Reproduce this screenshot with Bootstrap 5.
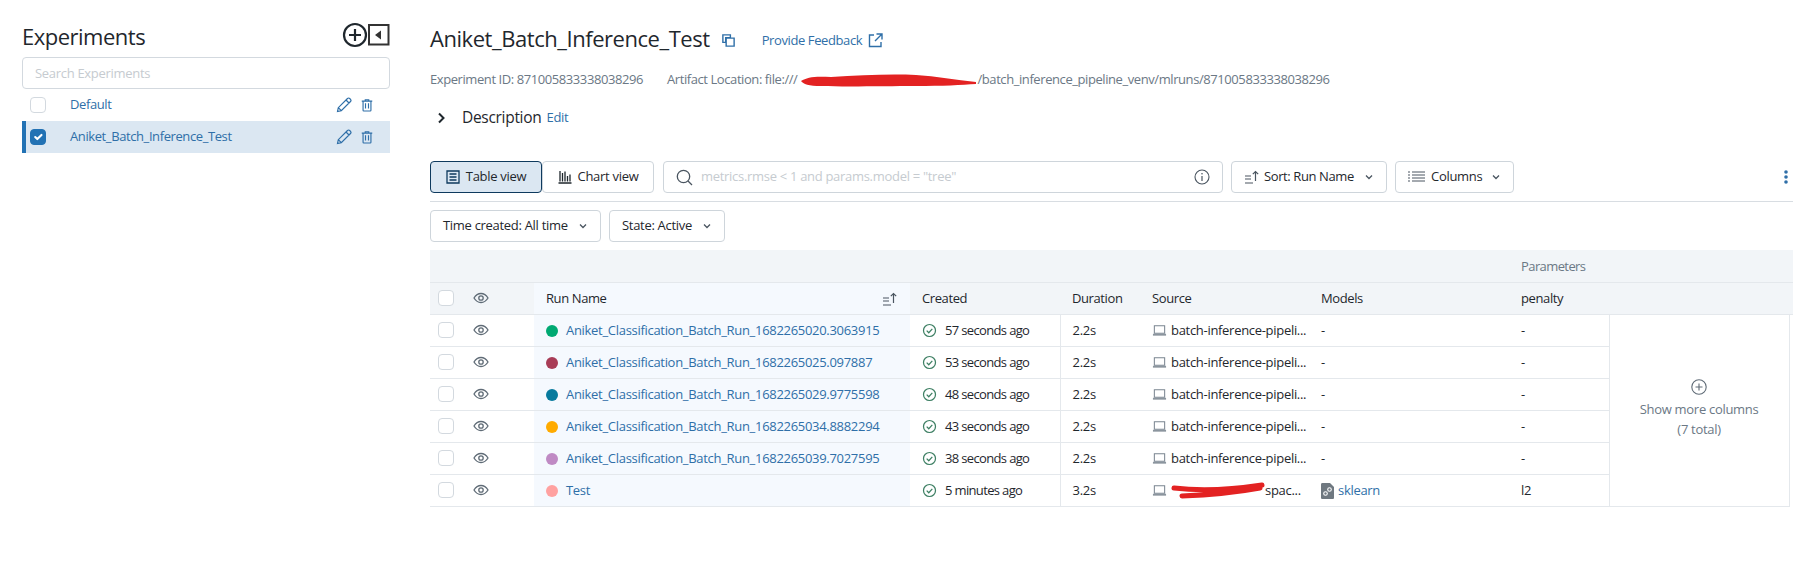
<!DOCTYPE html>
<html lang="en">
<head>
  <meta charset="UTF-8" />
  <meta name="viewport" content="width=device-width, initial-scale=1.0"/>
  <title>Experiments</title>
  <link href="https://cdn.jsdelivr.net/npm/bootstrap@5.3.2/dist/css/bootstrap.min.css" rel="stylesheet" />
  <style>
    body {
      font-family: "Open Sans", "Noto Sans", sans-serif;
      font-size: 13px;
      letter-spacing: -0.3px;
      color: #1f272d;
      background: #fff;
      height: 580px;
      overflow: hidden;
    }
    a { color: #2f6fa8; text-decoration: none; }
    .ico { flex: none; display: block; }

    /* sidebar */
    .side-col { width: 390px; padding-left: 22px; flex: none; }
    .side-head { height: 57px; padding-top: 21px; }
    .side-title { font-size: 22px; font-weight: 400; line-height: 30px; margin: 0; letter-spacing: -0.5px; }
    .side-search {
      height: 32px; font-size: 13px; border-color: #d3d9df; border-radius: 4px; padding: 0 12px; letter-spacing: -0.3px;
    }
    .side-search::placeholder, .qry-input::placeholder { color: #c6cbd0; opacity: 1; }
    .list-group-flush > .exp-row {
      height: 32px; border: 0; border-left: 4px solid transparent; background: transparent; padding: 0 16px 0 4px;
      gap: 24px; color: #2f6fa8; letter-spacing: -0.4px;
    }
    .list-group-flush > .exp-row.is-on { background: #dbe7f2; border-left-color: #2272b4; }
    .exp-row .exp-name { flex-grow: 1; }
    .exp-row .bin-ico { margin-left: -16px; }
    .form-check-input.tick {
      width: 16px; height: 16px; margin: 0; flex: none; border-color: #d3d9df; border-radius: 4px;
    }
    .form-check-input.tick:checked { background-color: #2272b4; border-color: #2272b4; }

    /* main header */
    .main-col { width: 1363px; margin-left: 40px; flex: none; }
    .exp-head { height: 32px; margin-top: 23px; }
    .exp-title { font-size: 22px; font-weight: 500; margin: 0 0 2px; letter-spacing: -0.45px; line-height: 30px; }
    .copy-ico { margin: 2px 0 0 11px; }
    .feedback { margin: 3px 0 0 26px; gap: 6px; letter-spacing: -0.4px; }
    .meta-line { margin-top: 14px; line-height: 20px; color: #6b7885; gap: 24px; white-space: nowrap; letter-spacing: -0.42px; }
    .scrib { display: inline-block; vertical-align: middle; margin-left: 4px; }
    .scrib-src { margin-right: -4px; }
    .desc-line { margin-top: 17px; height: 24px; padding-left: 7px; }
    .desc-text { font-size: 15.5px; margin-left: 16px; margin-right: 5px; letter-spacing: -0.3px; }

    /* toolbar */
    .tool-bar { margin-top: 31px; padding-bottom: 8px; border-bottom: 1px solid #d8dde2; gap: 8px; padding-right: 5px; }
    .tool-btn {
      height: 32px; font-size: 13px; letter-spacing: -0.3px; color: #1f272d; border: 1px solid #ced5db; border-radius: 4px;
      padding: 0 12px; background: #fff; display: inline-flex; align-items: center; gap: 6px; white-space: nowrap;
    }
    .btn-group .tool-btn { width: 112px; justify-content: center; }
    .btn-group .tool-btn.is-on { background: #dbe7f2; border-color: #0e3a5e; z-index: 1; }
    .qry-box {
      width: 560px; height: 32px; margin-left: 1px; border: 1px solid #ced5db; border-radius: 4px; padding: 0 12px; gap: 8px;
    }
    .qry-input { border: 0; padding: 0; font-size: 13px; letter-spacing: -0.3px; box-shadow: none; }
    .sort-btn { width: 156px; padding-left: 12px; gap: 4px; letter-spacing: -0.4px; }
    .cols-btn { width: 119px; padding-left: 12px; gap: 6px; }
    .filter-bar { margin-top: 8px; gap: 8px; }
    .time-btn { width: 171px; gap: 0; justify-content: space-between; }
    .state-btn { width: 116px; gap: 0; justify-content: space-between; }

    /* runs table */
    .runs-wrap { margin-top: 8px; }
    .table.runs-tbl { table-layout: fixed; width: 1363px; margin: 0; border-color: #e4e8ec; }
    .table.runs-tbl > * > tr > * {
      padding: 1px 12px 0; height: 32px; vertical-align: middle; white-space: nowrap; overflow: hidden;
      font-size: 13px; border-bottom: 1px solid #e4e8ec; color: #1f272d; background-color: #fff; box-shadow: none;
    }
    .table.runs-tbl > thead > tr > * { background-color: #f2f5f8; font-weight: 500; letter-spacing: -0.4px; }
    .table.runs-tbl > thead > tr > .run-cell,
    .table.runs-tbl > tbody > tr > .run-cell { background-color: #f5f9fe; }
    .table.runs-tbl > thead > tr > .param-group { color: #6b7885; font-weight: 400; letter-spacing: -0.6px; }
    .table.runs-tbl > tbody > tr > .sep-r { border-right: 1px solid #e4e8ec; letter-spacing: -0.65px; }
    .table.runs-tbl > tbody > tr > .more-cell {
      border: 1px solid #e4e8ec; border-top: 0; text-align: center; color: #6b7885; line-height: 20px; padding: 0 0 2px;
    }
    .table.runs-tbl > tbody > tr > .gap-cell { border: 0; padding: 0; }
    .table.runs-tbl > * > tr > .tick-cell { padding: 0 0 0 8px; }
    .table.runs-tbl > * > tr > .eye-cell { padding: 0 0 0 7px; }
    .dot { width: 12px; height: 12px; border-radius: 50%; flex: none; }
    .dot-1 { background: #00a972; }
    .dot-2 { background: #a83c56; }
    .dot-3 { background: #077a9d; }
    .dot-4 { background: #ffab00; }
    .dot-5 { background: #bf8ac4; }
    .dot-6 { background: #ffa1a0; }
  </style>
</head>
<body>
  <!-- icons used more than once -->
  <svg width="0" height="0" class="position-absolute">
    <symbol id="i-eye" viewBox="0 0 16 16"><path d="M1 8c1.800-3 4-4.500 7-4.500s5.200 1.500 7 4.500c-1.800 3-4 4.500-7 4.500S2.800 11 1 8z" fill="none" stroke="#5f6b76" stroke-width="1.300"/><circle cx="8" cy="8" r="2.200" fill="none" stroke="#5f6b76" stroke-width="1.300"/></symbol>
    <symbol id="i-ok" viewBox="0 0 16 16"><circle cx="8" cy="8" r="6.400" fill="none" stroke="#3d7f63" stroke-width="1.300"/><path d="M5 8.200l2.200 2.200L11 6.200" fill="none" stroke="#3d7f63" stroke-width="1.300"/></symbol>
    <symbol id="i-laptop" viewBox="0 0 16 16"><path d="M2.500 3h11v8h-11z" fill="none" stroke="#7a8590" stroke-width="1.100"/><path d="M1 11.500h14v2H1z" fill="#8b959e"/></symbol>
    <symbol id="i-pen" viewBox="0 0 16 16"><path d="M1.500 14.500l.8-3.800L11.500 1.500c.7-.7 1.500-.7 2.200 0l.8.8c.7.700.7 1.500 0 2.200L5.300 13.700zM2.300 10.700l3 3M10 3l3 3" fill="none" stroke="#2f6fa8" stroke-width="1.200"/></symbol>
    <symbol id="i-bin" viewBox="0 0 16 16"><path d="M2 3.500h12M6 3.500V2h4v1.500M3.500 3.500v10.500c0 .5.300.8.800.8h7.400c.5 0 .8-.3.8-.8V3.500M6.300 6v6M9.700 6v6" fill="none" stroke="#2f6fa8" stroke-width="1.300"/></symbol>
    <symbol id="i-chev" viewBox="0 0 10 10"><path d="M2 3.500l3 3 3-3" fill="none" stroke="#4a5560" stroke-width="1.300"/></symbol>
    <symbol id="i-sort" viewBox="0 0 16 16"><path d="M1 7h6M1 10h6M1 14h8M11.500 12V2.500M8.800 5.200l2.700-2.700 2.700 2.700" fill="none" stroke="#4a5560" stroke-width="1.200"/></symbol>
  </svg>

  <div class="d-flex">
    <aside class="side-col">
      <div class="side-head d-flex justify-content-between">
        <h1 class="side-title">Experiments</h1>
        <div class="d-flex gap-0">
          <svg class="ico" width="26" height="28" viewBox="0 0 26 28"><circle cx="13" cy="14" r="11" fill="none" stroke="#1f272d" stroke-width="2.200"/><path d="M13 8v12M7 14h12" stroke="#1f272d" stroke-width="2.200"/></svg>
          <svg class="ico" width="22" height="28" viewBox="0 0 22 28"><rect x="1" y="4" width="19.500" height="19.500" fill="none" stroke="#333" stroke-width="2"/><path d="M13 9.500v9l-6-4.500z" fill="#333"/></svg>
        </div>
      </div>
      <input class="form-control side-search" type="text" placeholder="Search Experiments" />
      <div class="list-group list-group-flush">
        <div class="list-group-item exp-row d-flex align-items-center">
          <input class="form-check-input tick" type="checkbox" />
          <a class="exp-name" href="#">Default</a>
          <svg class="ico" width="16" height="16"><use href="#i-pen"/></svg>
          <svg class="ico bin-ico" width="14" height="14"><use href="#i-bin"/></svg>
        </div>
        <div class="list-group-item exp-row is-on d-flex align-items-center">
          <input class="form-check-input tick" type="checkbox" checked />
          <a class="exp-name" href="#">Aniket_Batch_Inference_Test</a>
          <svg class="ico" width="16" height="16"><use href="#i-pen"/></svg>
          <svg class="ico bin-ico" width="14" height="14"><use href="#i-bin"/></svg>
        </div>
      </div>
    </aside>

    <main class="main-col">
      <div class="exp-head d-flex align-items-center">
        <h2 class="exp-title">Aniket_Batch_Inference_Test</h2>
        <svg class="ico copy-ico" width="15" height="15" viewBox="0 0 16 16"><path d="M2 2h8v3H5v5H2zM5.500 5.500h8.500v8.500H5.500z" fill="none" stroke="#2f6fa8" stroke-width="1.500"/></svg>
        <a class="feedback d-flex align-items-center" href="#">Provide Feedback
          <svg class="ico" width="15" height="15" viewBox="0 0 15 15"><path d="M6 2H1.500v11.500H13V9M8.500 1H14v5.500M14 1L7 8" fill="none" stroke="#2f6fa8" stroke-width="1.400"/></svg>
        </a>
      </div>

      <div class="meta-line d-flex">
        <span>Experiment ID: 871005833338038296</span>
        <span>Artifact Location: file:///<svg class="scrib" width="176" height="14" viewBox="0 0 176 14"><path d="M0 7C6 3 14 2 30 3 60 1 90 0 115 1c20 1 40 5 60 7v2c-14 1-34 2-60 2-30 0-70 1-95 0C8 12 2 10 0 7z" fill="#e32222"/></svg>/batch_inference_pipeline_venv/mlruns/871005833338038296</span>
      </div>

      <div class="desc-line d-flex align-items-center">
        <svg class="ico" width="9" height="12" viewBox="0 0 9 12"><path d="M2 1.500L6.500 6 2 10.500" fill="none" stroke="#1f272d" stroke-width="2"/></svg>
        <span class="desc-text">Description</span>
        <a href="#">Edit</a>
      </div>

      <div class="tool-bar d-flex align-items-center">
        <div class="btn-group" role="group">
          <button class="tool-btn is-on" type="button">
            <svg class="ico" width="14" height="14" viewBox="0 0 14 14"><path d="M1 1h12v12H1zM3.500 4h7M3.500 7h7M3.500 10h7" fill="none" stroke="#0e3a5e" stroke-width="1.300"/></svg>
            Table view
          </button>
          <button class="tool-btn" type="button">
            <svg class="ico" width="14" height="14" viewBox="0 0 14 14"><path d="M.5 13h13M2 11.500V1M4.500 11.500V3M7 11.500V1.500M9.500 11.500V6M12 11.500V4.500" fill="none" stroke="#1f272d" stroke-width="1.300"/></svg>
            Chart view
          </button>
        </div>
        <div class="qry-box d-flex align-items-center">
          <svg class="ico" width="17" height="17" viewBox="0 0 17 17"><circle cx="7.500" cy="7.500" r="6.200" fill="none" stroke="#4a5560" stroke-width="1.300"/><path d="M12 12l4 4" stroke="#4a5560" stroke-width="1.300"/></svg>
          <input class="form-control qry-input" type="text" placeholder='metrics.rmse &lt; 1 and params.model = "tree"' />
          <svg class="ico" width="16" height="16" viewBox="0 0 16 16"><circle cx="8" cy="8" r="7" fill="none" stroke="#4a5560" stroke-width="1.100"/><path d="M8 7v5" stroke="#4a5560" stroke-width="1.200"/><circle cx="8" cy="4.700" r=".8" fill="#4a5560"/></svg>
        </div>
        <button class="tool-btn sort-btn" type="button">
          <svg class="ico" width="16" height="16"><use href="#i-sort"/></svg>
          <span class="flex-grow-1 text-start">Sort: Run Name</span>
          <svg class="ico" width="10" height="10"><use href="#i-chev"/></svg>
        </button>
        <button class="tool-btn cols-btn" type="button">
          <svg class="ico" width="17" height="14" viewBox="0 0 17 14"><path d="M4 2h13M4 5h13M4 8h13M4 11h13M0 2h2M0 5h2M0 8h2M0 11h2" stroke="#4a5560" stroke-width="1"/></svg>
          <span class="flex-grow-1 text-start">Columns</span>
          <svg class="ico" width="10" height="10"><use href="#i-chev"/></svg>
        </button>
        <svg class="ico ms-auto" width="4" height="14" viewBox="0 0 4 14"><circle cx="2" cy="2" r="1.800" fill="#2f6fa8"/><circle cx="2" cy="7" r="1.800" fill="#2f6fa8"/><circle cx="2" cy="12" r="1.800" fill="#2f6fa8"/></svg>
      </div>

      <div class="filter-bar d-flex">
        <button class="tool-btn time-btn" type="button">Time created: All time
          <svg class="ico" width="10" height="10"><use href="#i-chev"/></svg>
        </button>
        <button class="tool-btn state-btn" type="button">State: Active
          <svg class="ico" width="10" height="10"><use href="#i-chev"/></svg>
        </button>
      </div>

      <div class="runs-wrap">
        <table class="table runs-tbl">
          <colgroup>
            <col style="width:36px"/><col style="width:68px"/><col style="width:376px"/><col style="width:150px"/>
            <col style="width:80px"/><col style="width:169px"/><col style="width:200px"/><col style="width:100px"/>
            <col style="width:180px"/><col style="width:4px"/>
          </colgroup>
          <thead>
            <tr>
              <th colspan="7"></th>
              <th colspan="3" class="param-group">Parameters</th>
            </tr>
            <tr>
              <th class="tick-cell"><input class="form-check-input tick d-block" type="checkbox" /></th>
              <th class="eye-cell"><svg class="ico" width="16" height="16"><use href="#i-eye"/></svg></th>
              <th class="run-cell">
                <div class="d-flex align-items-center justify-content-between">Run Name
                  <svg class="ico" width="16" height="16"><use href="#i-sort"/></svg>
                </div>
              </th>
              <th>Created</th>
              <th>Duration</th>
              <th>Source</th>
              <th>Models</th>
              <th colspan="3">penalty</th>
            </tr>
          </thead>
          <tbody>
            <tr>
              <td class="tick-cell"><input class="form-check-input tick d-block" type="checkbox" /></td>
              <td class="eye-cell"><svg class="ico" width="16" height="16"><use href="#i-eye"/></svg></td>
              <td class="run-cell"><div class="d-flex align-items-center gap-2"><span class="dot dot-1"></span><a href="#">Aniket_Classification_Batch_Run_1682265020.3063915</a></div></td>
              <td class="sep-r"><div class="d-flex align-items-center gap-2"><svg class="ico" width="15" height="15"><use href="#i-ok"/></svg>57 seconds ago</div></td>
              <td>2.2s</td>
              <td><div class="d-flex align-items-center gap-1"><svg class="ico" width="15" height="15"><use href="#i-laptop"/></svg>batch-inference-pipeli...</div></td>
              <td>-</td>
              <td>-</td>
              <td rowspan="6" class="more-cell">
                <svg class="ico mx-auto mb-1" width="16" height="16" viewBox="0 0 16 16"><circle cx="8" cy="8" r="7.200" fill="none" stroke="#5f6b76" stroke-width="1.100"/><path d="M8 4.500v7M4.500 8h7" stroke="#5f6b76" stroke-width="1.100"/></svg>
                Show more columns<br/>(7 total)
              </td>
              <td rowspan="6" class="gap-cell"></td>
            </tr>
            <tr>
              <td class="tick-cell"><input class="form-check-input tick d-block" type="checkbox" /></td>
              <td class="eye-cell"><svg class="ico" width="16" height="16"><use href="#i-eye"/></svg></td>
              <td class="run-cell"><div class="d-flex align-items-center gap-2"><span class="dot dot-2"></span><a href="#">Aniket_Classification_Batch_Run_1682265025.097887</a></div></td>
              <td class="sep-r"><div class="d-flex align-items-center gap-2"><svg class="ico" width="15" height="15"><use href="#i-ok"/></svg>53 seconds ago</div></td>
              <td>2.2s</td>
              <td><div class="d-flex align-items-center gap-1"><svg class="ico" width="15" height="15"><use href="#i-laptop"/></svg>batch-inference-pipeli...</div></td>
              <td>-</td>
              <td>-</td>
            </tr>
            <tr>
              <td class="tick-cell"><input class="form-check-input tick d-block" type="checkbox" /></td>
              <td class="eye-cell"><svg class="ico" width="16" height="16"><use href="#i-eye"/></svg></td>
              <td class="run-cell"><div class="d-flex align-items-center gap-2"><span class="dot dot-3"></span><a href="#">Aniket_Classification_Batch_Run_1682265029.9775598</a></div></td>
              <td class="sep-r"><div class="d-flex align-items-center gap-2"><svg class="ico" width="15" height="15"><use href="#i-ok"/></svg>48 seconds ago</div></td>
              <td>2.2s</td>
              <td><div class="d-flex align-items-center gap-1"><svg class="ico" width="15" height="15"><use href="#i-laptop"/></svg>batch-inference-pipeli...</div></td>
              <td>-</td>
              <td>-</td>
            </tr>
            <tr>
              <td class="tick-cell"><input class="form-check-input tick d-block" type="checkbox" /></td>
              <td class="eye-cell"><svg class="ico" width="16" height="16"><use href="#i-eye"/></svg></td>
              <td class="run-cell"><div class="d-flex align-items-center gap-2"><span class="dot dot-4"></span><a href="#">Aniket_Classification_Batch_Run_1682265034.8882294</a></div></td>
              <td class="sep-r"><div class="d-flex align-items-center gap-2"><svg class="ico" width="15" height="15"><use href="#i-ok"/></svg>43 seconds ago</div></td>
              <td>2.2s</td>
              <td><div class="d-flex align-items-center gap-1"><svg class="ico" width="15" height="15"><use href="#i-laptop"/></svg>batch-inference-pipeli...</div></td>
              <td>-</td>
              <td>-</td>
            </tr>
            <tr>
              <td class="tick-cell"><input class="form-check-input tick d-block" type="checkbox" /></td>
              <td class="eye-cell"><svg class="ico" width="16" height="16"><use href="#i-eye"/></svg></td>
              <td class="run-cell"><div class="d-flex align-items-center gap-2"><span class="dot dot-5"></span><a href="#">Aniket_Classification_Batch_Run_1682265039.7027595</a></div></td>
              <td class="sep-r"><div class="d-flex align-items-center gap-2"><svg class="ico" width="15" height="15"><use href="#i-ok"/></svg>38 seconds ago</div></td>
              <td>2.2s</td>
              <td><div class="d-flex align-items-center gap-1"><svg class="ico" width="15" height="15"><use href="#i-laptop"/></svg>batch-inference-pipeli...</div></td>
              <td>-</td>
              <td>-</td>
            </tr>
            <tr>
              <td class="tick-cell"><input class="form-check-input tick d-block" type="checkbox" /></td>
              <td class="eye-cell"><svg class="ico" width="16" height="16"><use href="#i-eye"/></svg></td>
              <td class="run-cell"><div class="d-flex align-items-center gap-2"><span class="dot dot-6"></span><a href="#">Test</a></div></td>
              <td class="sep-r"><div class="d-flex align-items-center gap-2"><svg class="ico" width="15" height="15"><use href="#i-ok"/></svg>5 minutes ago</div></td>
              <td>3.2s</td>
              <td><div class="d-flex align-items-center gap-1"><svg class="ico" width="15" height="15"><use href="#i-laptop"/></svg><svg class="ico scrib-src" width="94" height="18" viewBox="0 0 94 18"><path d="M3 6C28 9 58 8 91 3M11 14C38 13 62 11 89 6" fill="none" stroke="#e32222" stroke-width="5" stroke-linecap="round"/></svg>spac...</div></td>
              <td><div class="d-flex align-items-center gap-1">
                <svg class="ico" width="13" height="16" viewBox="0 0 13 16"><path d="M1.500 0H9l4 4v10.500c0 1-.5 1.500-1.500 1.500h-10C.5 16 0 15.500 0 14.500v-13C0 .5.500 0 1.500 0z" fill="#6f7880"/><circle cx="4.500" cy="10.500" r="1.800" fill="none" stroke="#fff" stroke-width="1.100"/><circle cx="8.500" cy="6.500" r="1.800" fill="none" stroke="#fff" stroke-width="1.100"/></svg>
                <a href="#">sklearn</a></div></td>
              <td>l2</td>
            </tr>
          </tbody>
        </table>
      </div>
    </main>
  </div>

  <script src="https://cdn.jsdelivr.net/npm/bootstrap@5.3.2/dist/js/bootstrap.bundle.min.js"></script>
</body>
</html>
